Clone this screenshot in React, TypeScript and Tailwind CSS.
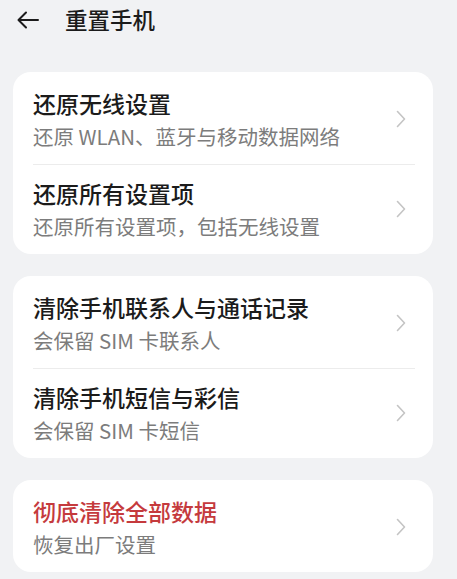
const font = { fontFamily: '"Noto Sans CJK SC", "Noto Sans", sans-serif' }

type Item = { title: string; sub: string; danger?: boolean }

const groups: Item[][] = [
  [
    { title: "还原无线设置", sub: "还原 WLAN、蓝牙与移动数据网络" },
    { title: "还原所有设置项", sub: "还原所有设置项，包括无线设置" },
  ],
  [
    { title: "清除手机联系人与通话记录", sub: "会保留 SIM 卡联系人" },
    { title: "清除手机短信与彩信", sub: "会保留 SIM 卡短信" },
  ],
  [{ title: "彻底清除全部数据", sub: "恢复出厂设置", danger: true }],
]

const Chevron = () => (
  <svg width="10" height="18" viewBox="0 0 10 18" fill="none" className="shrink-0">
    <path d="M1.5 1.5 L8.5 9 L1.5 16.5" stroke="#c4c4c4" strokeWidth="1.6" strokeLinecap="round" strokeLinejoin="round" />
  </svg>
)

const Row = ({ item, first }: { item: Item; first: boolean }) => (
  <div className={`flex items-center ${first ? "pt-[16px]" : "pt-[13px]"} pb-[14px] pr-[27px]`}>
    <div className="flex-1 flex flex-col gap-[4px]">
      <span className={`text-[23px] leading-[30px] font-medium ${item.danger ? "text-[#c53a3d]" : "text-[#1b1b1b]"}`}>
        {item.title}
      </span>
      <span className="text-[20.5px] leading-[28px] text-[#7c7c7c]">{item.sub}</span>
    </div>
    <Chevron />
  </div>
)

export default function App() {
  return (
    <div className="w-[457px] h-[579px] bg-[#f1f2f4] overflow-hidden" style={font}>
      <div className="flex items-center h-[40px] pl-[16px]">
        <svg width="24" height="20" viewBox="0 0 24 20" fill="none">
          <path d="M22 10 H3 M10 2.5 L2.5 10 L10 17.5" stroke="#1b1b1b" strokeWidth="2" strokeLinecap="round" strokeLinejoin="round" />
        </svg>
        <span className="ml-[25px] text-[22.5px] font-medium text-[#1b1b1b]">重置手机</span>
      </div>
      <div className="mt-[32px] ml-[13px] w-[420px] flex flex-col gap-[22px]">
        {groups.map((g, gi) => (
          <div key={gi} className="bg-white rounded-[18px] pl-[20px]">
            {g.map((item, i) => (
              <div key={i}>
                {i > 0 && <div className="h-px bg-[#ececec] mr-[18px]" />}
                <Row item={item} first={i === 0} />
              </div>
            ))}
          </div>
        ))}
      </div>
    </div>
  )
}
